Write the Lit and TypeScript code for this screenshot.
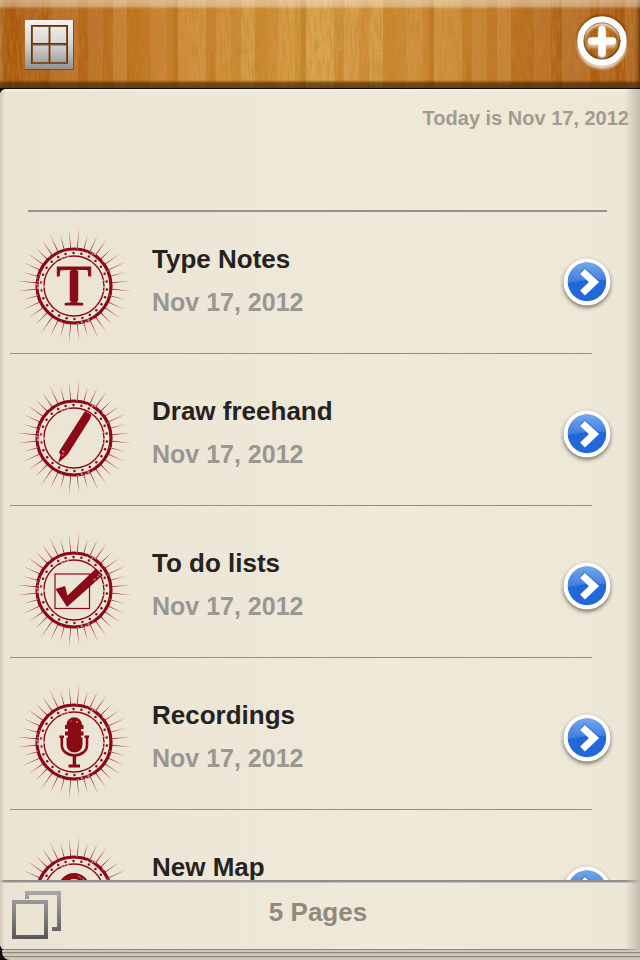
import { LitElement, html, svg, css } from "lit";
import { customElement, property } from "lit/decorators.js";

type Kind = "type" | "draw" | "todo" | "record" | "map";

const polar = (deg: number, r: number): [number, number] => {
  const a = (deg * Math.PI) / 180;
  return [Math.cos(a) * r, Math.sin(a) * r];
};

const rays = Array.from({ length: 36 }, (_, i) => {
  const deg = i * 10 + 5;
  const [x1, y1] = polar(deg - 0.7, 38);
  const [x2, y2] = polar(deg + 0.7, 38);
  const [x3, y3] = polar(deg, i % 3 === 0 ? 58 : i % 3 === 1 ? 54 : 56);
  return `M${x1.toFixed(2)} ${y1.toFixed(2)}L${x3.toFixed(2)} ${y3.toFixed(2)}L${x2.toFixed(2)} ${y2.toFixed(2)}Z`;
}).join("");

const dots = Array.from({ length: 26 }, (_, i) => polar((i * 360) / 26 + 6, 33));

/* worn spots in the ink: angle, radius, size */
const wear: number[][] = [
  [182, 37, 1.1], [177, 36, 1.3], [187, 36, 0.9], [192, 38, 0.9], [172, 34, 1], [185, 32, 1.1], [179, 30, 1.3],
  [198, 36, 0.7], [166, 38, 0.7], [300, 37, 1], [304, 38, 0.8], [296, 38, 0.7], [292, 36, 0.6], [258, 30, 1],
  [252, 31, 1.3], [262, 32, 0.8], [246, 30, 0.9], [78, 37, 1.1], [72, 38, 1], [67, 37, 1.2], [84, 38, 0.8],
  [60, 38, 0.7], [2, 30, 1.1], [355, 31, 0.9], [349, 30, 0.8], [10, 30, 0.8], [15, 37, 0.6], [336, 37, 0.6],
  [320, 38, 0.7], [230, 38, 0.6], [110, 38, 0.6], [130, 30, 0.6], [40, 30, 0.5], [275, 38, 0.6],
];

@customElement("note-stamp")
class NoteStamp extends LitElement {
  @property() kind: Kind = "type";

  static styles = css`
    :host { display: block; }
    svg { display: block; width: 120px; height: 120px; overflow: visible; }
    .ink { fill: #8a0a16; }
    .line { fill: none; stroke: #8a0a16; }
    .paper { fill: #ede7d8; }
    .gap { fill: none; stroke: #ede7d8; }
    .letter { font: 58px "Liberation Serif", "Times New Roman", serif; fill: #8a0a16; stroke: #8a0a16; stroke-width: 1px; }
  `;

  private symbol() {
    switch (this.kind) {
      case "type":
        return svg`<text class="letter" x="0" y="19" text-anchor="middle">T</text>
          <path class="line" stroke-width="8.5" d="M0-15V15"/>`;
      case "draw":
        return svg`<path class="ink" d="M11-27L17.5-23 16-19-6 16-9 19-16 25-13.5 17-15 14-12 9Z"/>
          <path class="gap" stroke-width=".6" d="M-12 12.5L-9.5 14M-12.5 18L-10 16.5"/>
          <circle class="paper" cx="-11" cy="14" r=".6"/>`;
      case "todo":
        return svg`<rect class="line" stroke-width="1.2" x="-19" y="-16" width="34.5" height="34.5"/>
          <path class="ink" d="M-18.5-1L-9-4-6.5 5.5 22-21.5 29-15-7 17Z"/>
          <path class="gap" stroke-width=".6" d="M19-10L22-11M20-7L25-10M24-15L27-15M23-13L25-13.5"/>`;
      case "record":
        return svg`<path class="ink" d="M-7.5-17A7.5 7.5 0 0 1 8-17H9.5V-13H7V-10.5H9.5V-6.5H7V-4.5H8.5V2.5A8 8 0 0 1-7.5 2.5V-4.5H-6V-6.5H-9V-10.5H-6V-13H-9V-17Z"/>
          <path class="line" stroke-width="2.6" d="M-14.5-5.2H-10M10.5-5.2H15M-12.2-5V3C-12.2 9.5-6 13.4 .4 13.4S13 9.5 13 3V-5"/>
          <path class="line" stroke-width="3.4" d="M.4 13V24"/>
          <path class="ink" d="M-5.5 22.5H6V25.5H-5.5Z"/>
          <circle class="paper" cx="3" cy="-20" r=".8"/><circle class="paper" cx="-3" cy="-21" r=".5"/>`;
      case "map":
        return svg`<path class="line" stroke-width="6" d="M0 27C-5 17-13 6-13-5A13 13 0 0 1 13-5C13 6 5 17 0 27"/>
          <path class="gap" stroke-width=".6" d="M4-18L7-16M8-16L11-13"/>`;
    }
  }

  render() {
    return html`<svg viewBox="-60 -60 120 120" aria-hidden="true">
      <path class="ink" opacity=".8" d=${rays} />
      <circle class="line" r="37" stroke-width="3.2" />
      <circle class="line" r="30" stroke-width="1.4" />
      ${dots.map(([x, y]) => svg`<circle class="ink" cx=${x.toFixed(2)} cy=${y.toFixed(2)} r="1.25"/>`)}
      ${wear.map(([a, r, s]) => {
        const [x, y] = polar(a, r);
        return svg`<circle class="paper" opacity=".6" cx=${x.toFixed(2)} cy=${y.toFixed(2)} r=${s}/>`;
      })}
      ${this.symbol()}
    </svg>`;
  }
}

/* board edges inside one 128px repeat: start, width, tone, strength */
const boards: [number, number, string, number][] = [
  [0, 28, "#ffe0b0", 0.13], [28, 10, "#b86200", 0.12], [38, 15, "#ffe0b0", 0.09], [53, 10, "#b86200", 0.06],
  [63, 14, "#ffe0b0", 0.15], [77, 13, "#b86a00", 0.18], [90, 10, "#b86a00", 0.08], [100, 17, "#ffe0b0", 0.08],
  [117, 6, "#b86a00", 0.1], [123, 5, "#a85500", 0.3],
];

@customElement("wood-panel")
class WoodPanel extends LitElement {
  static styles = css`
    :host { display: block; overflow: hidden; }
    svg { display: block; width: 100%; height: 100%; }
  `;
  render() {
    return html`<svg aria-hidden="true">
      <defs>
        <linearGradient id="tone">
          <stop offset="0" stop-color="#a4540f" />
          <stop offset=".12" stop-color="#b4641c" />
          <stop offset=".28" stop-color="#c9822f" />
          <stop offset=".5" stop-color="#d59c44" />
          <stop offset=".72" stop-color="#c8822f" />
          <stop offset=".9" stop-color="#ae601c" />
          <stop offset="1" stop-color="#a4540f" />
        </linearGradient>
        <pattern id="boards" x="50" width="128" height="200" patternUnits="userSpaceOnUse">
          ${boards.map(([x, w, c, o]) => svg`<rect x=${x} width=${w} height="200" fill=${c} opacity=${o}/>`)}
          <path d="M12 18H27M64 51H77M30 52H40M102 24H116" stroke="#8a4a08" opacity=".12" />
          <path d="M32 82Q32 54 34 52T37 82" fill="#a85a08" opacity=".2" />
        </pattern>
        <filter id="grain" x="0" y="0" width="100%" height="100%">
          <feTurbulence type="fractalNoise" baseFrequency="0.4 0.05" numOctaves="3" seed="7" />
          <feColorMatrix values="0 0 0 0 .5  0 0 0 0 .24  0 0 0 0 .02  1.4 0 0 0 -.55" />
        </filter>
      </defs>
      <rect width="100%" height="100%" fill="url(#tone)" />
      <rect width="100%" height="100%" fill="url(#boards)" />
      <rect width="100%" height="100%" filter="url(#grain)" />
    </svg>`;
  }
}

@customElement("app-root")
class AppRoot extends LitElement {
  @property({ attribute: false }) notes: { kind: Kind; title: string; date: string }[] = [
    { kind: "type", title: "Type Notes", date: "Nov 17, 2012" },
    { kind: "draw", title: "Draw freehand", date: "Nov 17, 2012" },
    { kind: "todo", title: "To do lists", date: "Nov 17, 2012" },
    { kind: "record", title: "Recordings", date: "Nov 17, 2012" },
    { kind: "map", title: "New Map", date: "Nov 17, 2012" },
  ];

  static styles = css`
    :host {
      display: flex;
      flex-direction: column;
      height: 100vh;
      background: #0c0a08;
      font-family: "Liberation Sans", Arial, sans-serif;
      font-weight: bold;
    }
    button { border: 0; padding: 0; background: none; cursor: pointer; }
    button svg { display: block; overflow: visible; }

    header {
      position: relative;
      display: flex;
      justify-content: space-between;
      align-items: center;
      flex: none;
      height: 88px;
      padding: 0 12px 0 24px;
      box-sizing: border-box;
      margin-bottom: 1px;
    }
    .wood { position: absolute; inset: 0; }
    .bevel {
      position: absolute;
      inset: 0;
      background:
        linear-gradient(#ffffff70, #ffffff58 6px, #ffffff00 9px),
        linear-gradient(to top, #4a2400c0, #4a2400a0 5px, #4a240000 8px),
        linear-gradient(to left, #3a180080, #3a180000 5px),
        linear-gradient(to right, #ffffff26, #ffffff00 6px);
    }
    header button { position: relative; }

    .paper {
      flex: 1;
      min-height: 0;
      display: flex;
      flex-direction: column;
      position: relative;
      border-radius: 6px 0 0 6px;
      overflow: hidden;
      background: linear-gradient(to right, #ebe4d5, #efe9da 60%, #ede7d7);
    }
    .shade {
      position: absolute;
      inset: 0;
      pointer-events: none;
      background:
        linear-gradient(to left, #c4bcac, #c4bcac00 16px),
        linear-gradient(to right, #d0c8b8, #d0c8b800 5px),
        linear-gradient(#fffaf080, #fffaf000 4px);
    }
    .scroll { flex: 1; min-height: 0; overflow-y: auto; scrollbar-width: none; }
    .today {
      margin: 0;
      padding: 18px 11px 80px;
      font-size: 20px;
      line-height: 23px;
      text-align: right;
      color: #a39b8d;
    }
    .head-rule { height: 2px; margin: 0 33px -10px 28px; background: #96928c; }
    ul { list-style: none; margin: 0; padding: 0; }
    .row {
      display: flex;
      align-items: center;
      min-height: 151px;
      box-sizing: border-box;
      padding: 8px 29px 0 14px;
    }
    .row note-stamp { margin-top: 8px; }
    .words { flex: 1; padding: 0 0 1px 18px; }
    h2, .date { margin: 0; line-height: 43px; }
    h2 { font-size: 26px; color: #25231f; }
    .date { font-size: 25px; color: #9a9691; }
    .rule { height: 1px; margin: 0 48px 0 10px; background: #918d87; }

    footer {
      flex: none;
      display: grid;
      grid-template-columns: 1fr auto 1fr;
      align-items: center;
      height: 67px;
      padding: 0 16px 0 12px;
      border-top: 2px solid #928e89;
      border-bottom: 1px solid #8d867b;
      box-shadow: inset 0 1px #c8c2b6;
    }
    footer button { justify-self: start; margin-bottom: 2px; }
    .count { margin: 0 0 8px; font-size: 26px; line-height: 30px; color: #91897c; }
    .sheets {
      flex: none;
      height: 10px;
      margin-left: 2px;
      border-bottom-left-radius: 8px;
      background: repeating-linear-gradient(#cfc8ba 0 2px, #8e877b 2px 3px, #c3bcae 3px 4px);
    }
  `;

  render() {
    return html`
      <header>
        <wood-panel class="wood"></wood-panel>
        <div class="bevel"></div>
        <button aria-label="Shelf view">
          <svg width="50" height="50" viewBox="0 -1 50 50">
            <defs>
              <linearGradient id="frame" x2="0" y2="1">
                <stop offset="0" stop-color="#f7f5f3" /><stop offset=".5" stop-color="#d5d3d2" /><stop offset="1" stop-color="#929292" />
              </linearGradient>
            </defs>
            <path fill="#51361f" opacity=".6" d="M1 0H50V50H1Z" />
            <path fill="url(#frame)" d="M1 0H49V49H1Z" />
            <path fill="none" stroke="#815025" stroke-width="2" d="M8 6H43V43H8ZM25.5 6V43M8 24.5H43" />
            <path fill="none" stroke="#553a22" stroke-width="1" d="M7 5.5H44M25.5 7V43M7 23.5H43M7.5 6V43M43.5 6V43" />
          </svg>
        </button>
        <button aria-label="Add page">
          <svg width="52" height="52" viewBox="-26 -26 52 52">
            <defs><filter id="soft" x="-20%" y="-20%" width="140%" height="140%"><feGaussianBlur stdDeviation="1.2" /></filter></defs>
            <g transform="translate(0 -3)">
              <g filter="url(#soft)" fill="none" stroke-linecap="round">
                <circle r="21.5" cy="3" stroke="#fff" stroke-width="7" opacity=".7" />
                <path d="M-10.5 3H10.5M0-7V14" stroke="#fff" stroke-width="8" opacity=".5" />
                <circle r="21.5" cy="-1" stroke="#4b2500" stroke-width="7" opacity=".7" />
              </g>
              <g fill="none" stroke="#fff" stroke-linecap="round">
                <circle r="21.5" stroke-width="6.5" />
                <circle r="18.2" stroke="#5a2c06" stroke-width="1" opacity=".5" />
                <path d="M-10.5 0H10.5M0-11.5V12" stroke-width="7.5" />
              </g>
            </g>
          </svg>
        </button>
      </header>
      <main class="paper">
        <div class="scroll">
          <p class="today">Today is Nov 17, 2012</p>
          <div class="head-rule"></div>
          <ul>
            ${this.notes.map(
              (n) => html`<li>
                <div class="row">
                  <note-stamp .kind=${n.kind}></note-stamp>
                  <div class="words">
                    <h2>${n.title}</h2>
                    <p class="date">${n.date}</p>
                  </div>
                  <button aria-label="Open ${n.title}">
                    <svg width="48" height="48" viewBox="-24 -24 48 48">
                      <defs>
                        <linearGradient id="blue" x2="0" y2="1"><stop offset="0" stop-color="#74a6ea" /><stop offset="1" stop-color="#3d7cdd" /></linearGradient>
                        <filter id="drop" x="-30%" y="-30%" width="160%" height="160%"><feGaussianBlur stdDeviation="2" /></filter>
                      </defs>
                      <circle r="23.5" cy="2" fill="#574c3c" opacity=".8" filter="url(#drop)" />
                      <circle r="23.5" fill="#fff" />
                      <circle r="19.2" fill="#2368da" />
                      <path d="M-19.2 1A19.2 19.2 0 0 1 19.2-2Q0-4-19.2 1Z" fill="url(#blue)" />
                      <path d="M-4.5-11L7 0-4.5 11" fill="none" stroke="#1247a8" stroke-width="7" opacity=".4" transform="translate(0 -1)" />
                      <path d="M-4.5-10.5L7 0-4.5 11" fill="none" stroke="#fff" stroke-width="7" />
                    </svg>
                  </button>
                </div>
                <div class="rule"></div>
              </li>`
            )}
          </ul>
        </div>
        <footer>
          <button aria-label="Select pages">
            <svg width="49" height="48" viewBox="0 0 49 48">
              <defs>
                <linearGradient id="steel" gradientUnits="userSpaceOnUse" x1="0" y1="0" x2="0" y2="48">
                  <stop offset="0" stop-color="#a9a9a8" /><stop offset="1" stop-color="#575757" />
                </linearGradient>
              </defs>
              <g fill="none" stroke="url(#steel)" stroke-width="4">
                <path d="M2 11H34V46H2Z" />
                <path d="M15 8V2H47V38H40" />
              </g>
            </svg>
          </button>
          <p class="count">${this.notes.length} Pages</p>
        </footer>
        <div class="shade"></div>
      </main>
      <div class="sheets"></div>
    `;
  }
}
